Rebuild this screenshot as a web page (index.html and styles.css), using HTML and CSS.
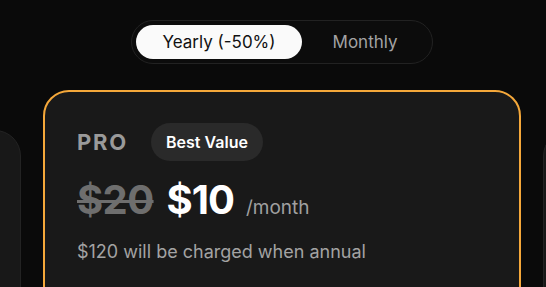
FILE: index.html
```html
<!DOCTYPE html>
<html>
<head>
<meta charset="utf-8">
<link rel="stylesheet" href="styles.css">
</head>
<body>
<div class="page">
  <div class="toggle-wrap">
    <div class="toggle">
      <button class="opt active">Yearly (-50%)</button>
      <button class="opt monthly">Monthly</button>
    </div>
  </div>
  <div class="cards">
    <div class="card side"></div>
    <div class="card featured">
      <div class="head">
        <span class="plan">PRO</span>
        <span class="badge">Best Value</span>
      </div>
      <div class="price">
        <span class="old">$20</span>
        <span class="new">$10</span>
        <span class="per">/month</span>
      </div>
      <p class="note">$120 will be charged when annual</p>
    </div>
    <div class="card side"></div>
  </div>
</div>
</body>
</html>
```

FILE: styles.css
```css
html, body {
  margin: 0;
  padding: 0;
  background: #0a0a0a;
  overflow: hidden;
  height: 287px;
}
body {
  font-family: Inter, "Noto Sans", sans-serif;
  color: #fff;
}
.page {
  width: 546px;
  padding-left: 18px;
  box-sizing: border-box;
}
.toggle-wrap {
  display: flex;
  justify-content: center;
  padding-top: 20px;
}
.toggle {
  display: flex;
  padding: 4px;
  border: 1px solid #222;
  border-radius: 22px;
  background: #0c0c0c;
}
.opt {
  font-family: inherit;
  font-size: 17px;
  font-weight: 400;
  height: 34px;
  border: none;
  background: transparent;
  color: #a3a3a3;
  border-radius: 17px;
  padding: 0 26px;
  cursor: pointer;
}
.opt.active {
  background: #fafafa;
  color: #111;
  padding: 0 26px;
}
.opt.monthly {
  padding: 0 30px 0 31px;
}
.cards {
  display: flex;
  justify-content: center;
  gap: 22px;
  margin-top: 26px;
}
.card {
  flex: 0 0 478px;
  box-sizing: border-box;
  border-radius: 26px;
  background: #191919;
  min-height: 300px;
}
.card.side {
  margin-top: 40px;
  border: 1px solid #232323;
  background: #181818;
}
.card.featured {
  border: 2px solid #f5a83a;
  padding: 31px 32px;
}
.head {
  display: flex;
  align-items: center;
  gap: 23px;
}
.plan {
  font-size: 22px;
  font-weight: 700;
  color: #9a9a9a;
  letter-spacing: 1.8px;
}
.badge {
  background: #2a2a2a;
  color: #fff;
  font-size: 16px;
  font-weight: 600;
  border-radius: 19px;
  height: 38px;
  line-height: 38px;
  padding: 0 15px;
}
.price {
  display: flex;
  align-items: baseline;
  margin-top: 14px;
}
.old {
  font-size: 40px;
  font-weight: 700;
  color: #6e6e6e;
  text-decoration: line-through;
  text-decoration-thickness: 3px;
  letter-spacing: -0.6px;
}
.new {
  font-size: 40px;
  font-weight: 700;
  color: #fff;
  margin-left: 13px;
  letter-spacing: -1px;
}
.per {
  font-size: 19px;
  color: #a0a0a0;
  margin-left: 12px;
}
.note {
  margin: 17px 0 0;
  font-size: 18px;
  color: #a3a3a3;
}
```
